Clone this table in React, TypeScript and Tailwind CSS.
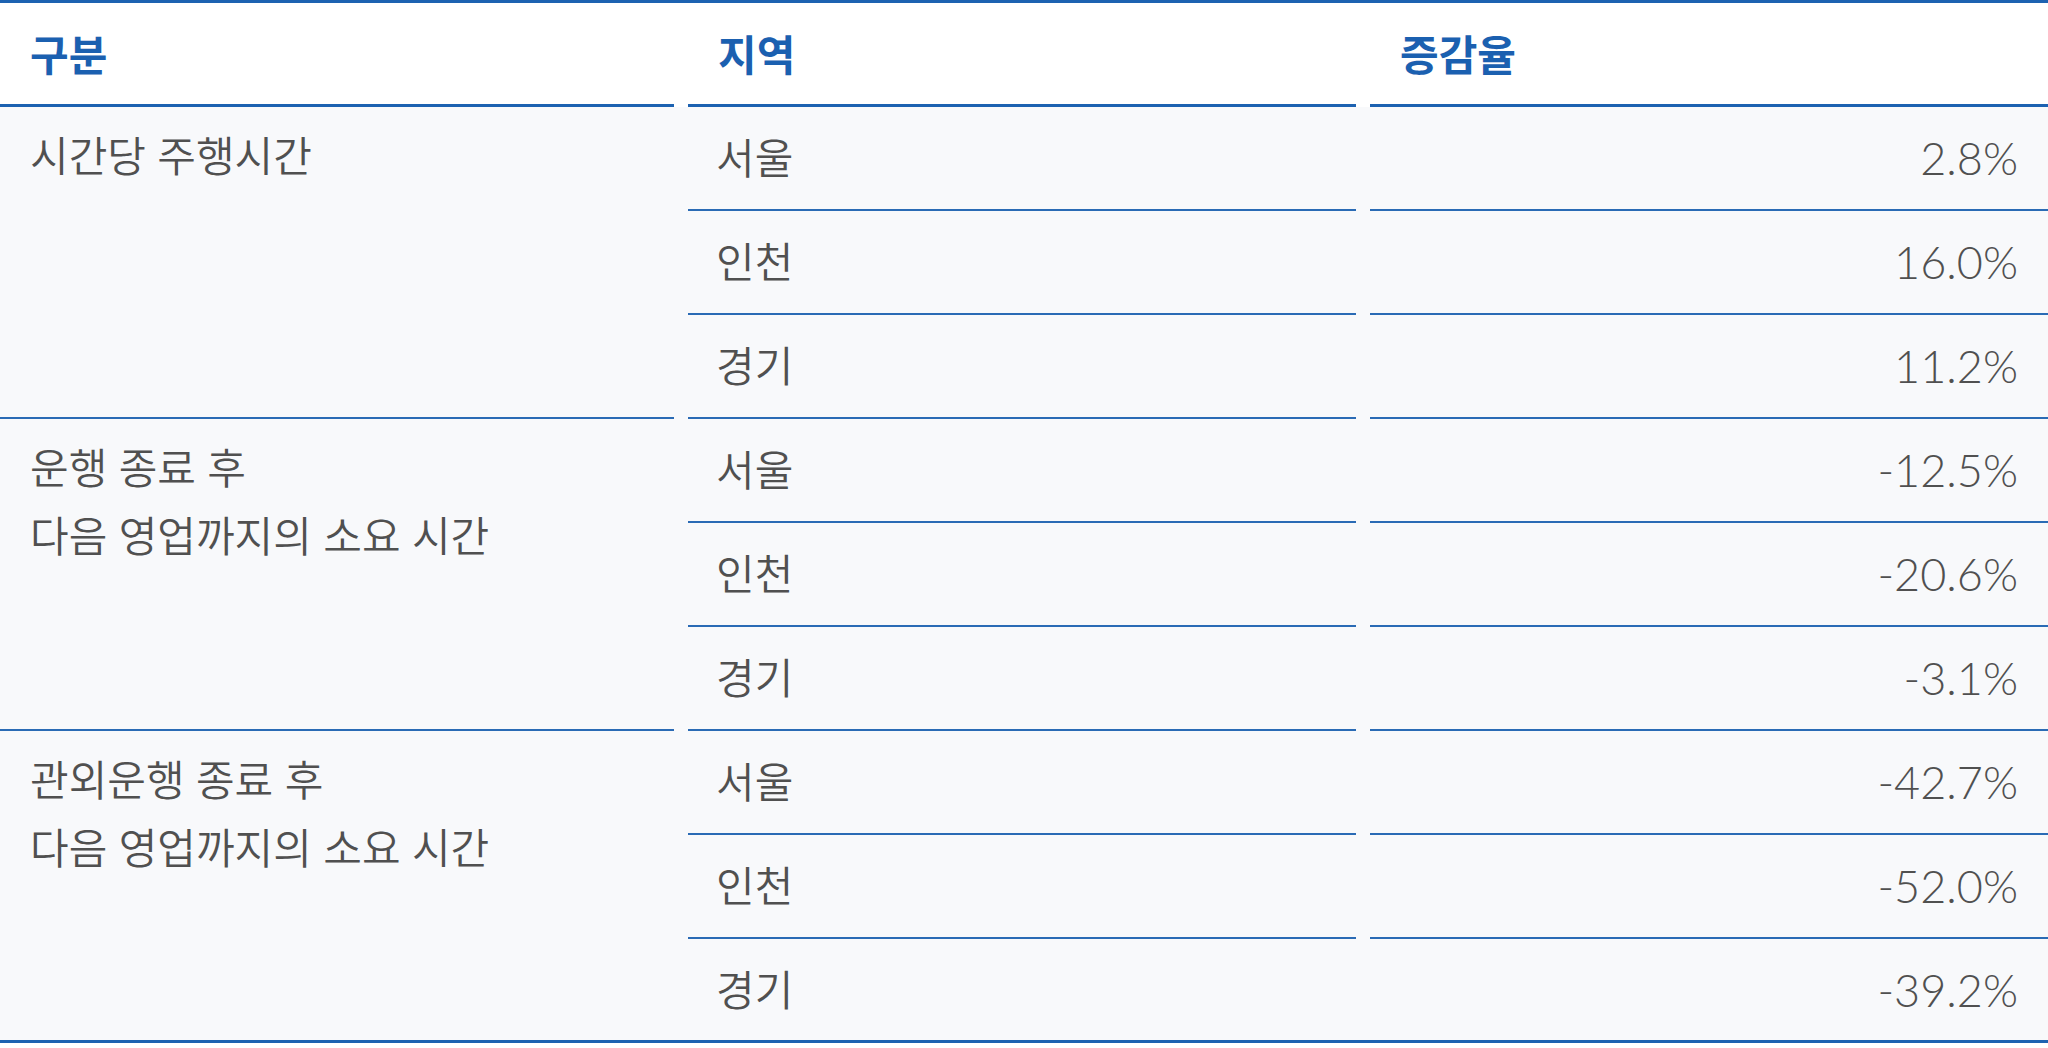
const groups = [
  {
    label: ['시간당 주행시간'],
    rows: [
      { region: '서울', rate: '2.8%' },
      { region: '인천', rate: '16.0%' },
      { region: '경기', rate: '11.2%' },
    ],
  },
  {
    label: ['운행 종료 후', '다음 영업까지의 소요 시간'],
    rows: [
      { region: '서울', rate: '-12.5%' },
      { region: '인천', rate: '-20.6%' },
      { region: '경기', rate: '-3.1%' },
    ],
  },
  {
    label: ['관외운행 종료 후', '다음 영업까지의 소요 시간'],
    rows: [
      { region: '서울', rate: '-42.7%' },
      { region: '인천', rate: '-52.0%' },
      { region: '경기', rate: '-39.2%' },
    ],
  },
];

export default function App() {
  return (
    <div
      className="w-[2048px] bg-white text-[42px] leading-[68px] font-[350] text-[#505050]"
      style={{ fontFamily: 'Lato, "Noto Sans CJK KR", sans-serif' }}
    >
      <div className="border-t-[3px] border-b-[3px] border-[#1d62b1]">
        {/* Header */}
        <div className="grid grid-cols-[674px_668px_678px] gap-x-[14px] bg-white">
          {['구분', '지역', '증감율'].map((h) => (
            <div
              key={h}
              className="border-b-[3px] border-[#1d62b1] pl-[30px] pt-[16px] pb-[17px] font-bold text-[#1b60b0]"
              style={{ fontFamily: '"Noto Sans CJK KR", sans-serif' }}
            >
              {h}
            </div>
          ))}
        </div>

        {/* Body */}
        <div className="bg-[#f8f9fb]">
          {groups.map((g, gi) => (
            <div key={gi} className="grid grid-cols-[674px_1360px] gap-x-[14px]">
              <div
                className={`pl-[30px] pt-[15px] ${gi < groups.length - 1 ? 'border-b-2 border-[#2a6bb5]' : ''}`}
              >
                {g.label.map((l) => (
                  <div key={l}>{l}</div>
                ))}
              </div>
              <div>
                {g.rows.map((r, ri) => {
                  const last = gi === groups.length - 1 && ri === g.rows.length - 1;
                  return (
                    <div key={r.region} className="grid grid-cols-[668px_678px] gap-x-[14px]">
                      <div className={`pl-[28px] py-[17px] ${last ? 'pb-[16px]' : 'border-b-2 border-[#2a6bb5]'}`}>
                        {r.region}
                      </div>
                      <div
                        className={`pr-[30px] py-[17px] text-right text-[45px] ${last ? 'pb-[16px]' : 'border-b-2 border-[#2a6bb5]'}`}
                      >
                        {r.rate}
                      </div>
                    </div>
                  );
                })}
              </div>
            </div>
          ))}
        </div>
      </div>
    </div>
  );
}
